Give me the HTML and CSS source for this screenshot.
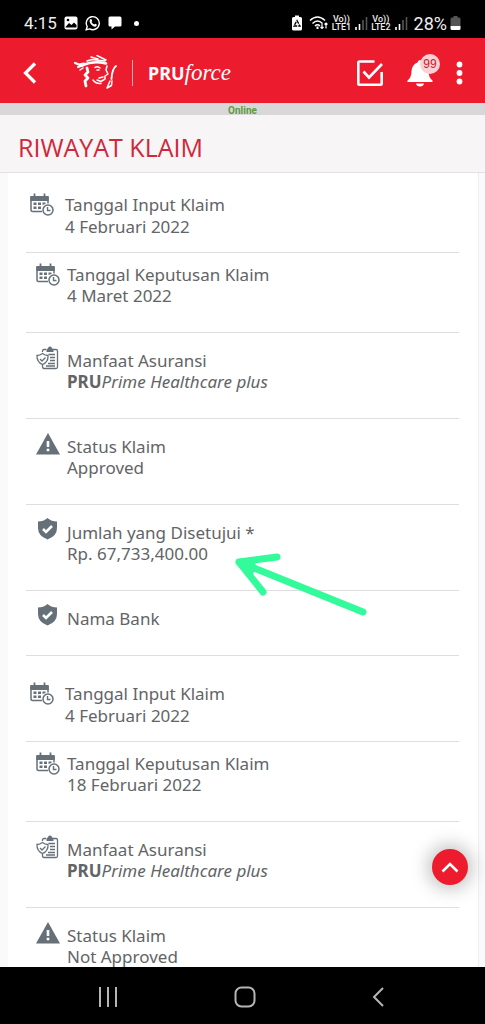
FILE: index.html
```html
<!DOCTYPE html>
<html lang="id">
<head>
<meta charset="utf-8">
<meta name="viewport" content="width=device-width, initial-scale=1">
<title>Riwayat Klaim</title>
<link rel="stylesheet" href="styles.css">
</head>
<body>
<svg class="sprite" aria-hidden="true">
  <symbol id="calendar" viewBox="0 0 24 24">
    <g fill="none" stroke="currentColor">
      <path d="M12 18.500H2.500Q1 18.500 1 17V4" stroke-width="1.500"/>
      <path d="M18 4V10.500" stroke-width="1.500"/>
      <path d="M4.500 .500V5M14.500 .500V5" stroke-width="1.800"/>
      <circle cx="18" cy="17" r="5" stroke-width="1.500"/>
      <path d="M17.500 14V17.500H20.500" stroke-width="1.400"/>
    </g>
    <path fill="currentColor" d="M.300 3H18.700V8H.300Z"/>
    <path fill="currentColor" d="M3.500 9.500h3v2.500h-3zM8 9.500h3v2.500h-3zM12.500 9.500h3v1.500l-3 1zM3.500 13.500h3v2.500h-3zM8 13.500h3v2.500h-3z"/>
  </symbol>
  <symbol id="policy" viewBox="0 0 24 24">
    <g fill="none" stroke="currentColor" stroke-width="1.300">
      <path d="M6.500 6V5Q6.500 3.500 8 3.500H10M17 3.500H20Q21.500 3.500 21.500 5V21Q21.500 22.500 20 22.500H8Q6.500 22.500 6.500 20.500V18"/>
      <path d="M6.500 7.500Q9 9.500 12 9.500Q12.500 16 6.500 18.500Q.700 16 1 9.500Q4 9.500 6.500 7.500Z"/>
      <path d="M4 13L6 15L9.500 11.500M12.500 8.500H19M14 11.500H19M14 14.500H19M12 17.500H19M10 20H19"/>
    </g>
    <path fill="currentColor" d="M10.500 6V3.500Q10.500 2.500 12 2.500Q12 .500 14 .500T16 2.500Q17.500 2.500 17.500 3.500V6Z"/>
  </symbol>
  <symbol id="warning" viewBox="0 0 24 24">
    <path fill="currentColor" d="M12 1L24 22.500H0Z"/>
    <path stroke="#fff" stroke-width="2.600" d="M12 9V15M12 16.800V19.300"/>
  </symbol>
  <symbol id="shield" viewBox="0 0 24 24">
    <path fill="currentColor" d="M11.500 0Q15.500 3.500 21 3.500V10Q21 18 11.500 21.500Q2 18 2 10V3.500Q7.500 3.500 11.500 0Z"/>
    <path fill="none" stroke="#fff" stroke-width="2.600" d="M7 11L10 14L16 8"/>
  </symbol>
  <symbol id="signal" viewBox="0 0 14 14">
    <path stroke="#fff" stroke-width="1.600" d="M2 11V14M5.500 8V14"/>
    <path stroke="#555" stroke-width="1.600" d="M9 4V14M12.500 1V14"/>
  </symbol>
</svg>

<div class="status">
  <div class="status-left">
    <span class="clock">4:15</span>
    <svg width="14" height="14" viewBox="0 0 14 14"><rect x=".500" y=".500" width="13" height="13" rx="2" fill="#fff"/><path d="M1.500 11L5 7L7.500 9L10 6.500L12.500 9V11.500H1.500Z" fill="#000"/><circle cx="4" cy="4" r="1.300"/></svg>
    <svg width="16" height="16" viewBox="0 0 16 16" fill="none" stroke="#fff"><path stroke-width="1.400" d="M1.200 14.800L2.200 11.500A6.500 6.500 0 1 1 4.700 13.900Z"/><path fill="#fff" stroke="none" d="M5 4.500Q6 3.500 6.700 4.500L7.200 6L6.500 7Q7.500 8.700 9.200 9.500L10.200 8.700L11.800 9.500Q12 11 10.500 11.700Q8.500 12 6.300 9.700Q3.800 7 5 4.500Z"/></svg>
    <svg width="14" height="14" viewBox="0 0 14 14"><path fill="#fff" d="M2 .500H12Q13.500 .500 13.500 2V9Q13.500 10.500 12 10.500H7L3.500 13.500V10.500H2Q.500 10.500 .500 9V2Q.500 .500 2 .500Z"/></svg>
    <span class="dot"></span>
  </div>
  <div class="status-right">
    <svg width="12" height="16" viewBox="0 0 12 16"><path fill="#fff" d="M4 .500H8V2H9.500Q11 2 11 3.500V14Q11 15.500 9.500 15.500H2.500Q1 15.500 1 14V3.500Q1 2 2.500 2H4Z"/><path fill="none" stroke="#000" stroke-width="1.300" stroke-dasharray="3.500 1" d="M6 5.500L9 11H3Z"/></svg>
    <svg class="wifi" width="20" height="16" viewBox="0 0 20 16" fill="none" stroke="#fff" stroke-width="1.500"><path d="M1 5.500Q8.500-1.500 16 5.500M3.500 8.500Q8.500 3.500 13.500 8.500M6 11Q8.500 8.500 11 11"/><path d="M8.500 11.500V14" stroke-width="2"/><path stroke-width="1.200" d="M13 8.500V13.500M11.500 12L13 13.500L14.500 12M17 13.500V8M15.500 9.500L17 8L18.500 9.500"/></svg>
    <span class="lte"><span>Vo))</span><span>LTE1</span></span>
    <svg width="14" height="14"><use href="#signal"/></svg>
    <span class="lte"><span>Vo))</span><span>LTE2</span></span>
    <svg width="14" height="14"><use href="#signal"/></svg>
    <span class="percent">28%</span>
    <svg width="11" height="16" viewBox="0 0 11 16"><path fill="#555" d="M3.500 1H7.500V2.500H9Q10.500 2.500 10.500 4V11H.500V4Q.500 2.500 2 2.500H3.500Z"/><path fill="#fff" d="M.500 11H10.500V13.500Q10.500 15 9 15H2Q.500 15 .500 13.500Z"/></svg>
  </div>
</div>

<header class="appbar">
  <button class="icon-btn back" aria-label="Kembali"><svg width="14" height="22" viewBox="0 0 14 22" fill="none" stroke="#fff" stroke-width="3.200"><path d="M12 1.500L2.500 11L12 20.500"/></svg></button>
  <svg class="face" width="46" height="36" viewBox="0 0 46 36" fill="none" stroke="#fff" stroke-linecap="round" stroke-linejoin="round">
    <path stroke-width="2.600" d="M10 10Q20 5.500 33 8.500"/>
    <path stroke-width="2.200" d="M2 8L6 9.500L11 8.500M5 12L10 10.500"/>
    <path stroke-width="1.500" d="M14 6L19 4.500L32 6M18 2L25 4M24 .500L33 5M10 13L7 15"/>
    <path stroke-width="2.800" d="M14 13L15 17L12 20L15 23L12 26L13 31"/>
    <path stroke-width="1.500" d="M22 12.500Q24 11 27 13M24 15H26M34 11L33 15L35 19L32 21L32 24L28 26.500L24 25M30 22L26 23M20 25Q23 29 28 28.500"/>
    <path stroke-width="1.900" d="M43 11Q39 14 38.500 24"/>
    <path stroke-width="1.500" d="M37 26L34 33L38.500 30.500L39 26"/>
  </svg>
  <span class="divider"></span>
  <span class="brand"><b>PRU</b><i>force</i></span>
  <div class="actions">
    <button class="icon-btn" aria-label="Tugas"><svg width="28" height="28" viewBox="0 0 28 28" fill="none" stroke="#fff" stroke-width="2.600"><path d="M18.500 2.500H3.500Q2.300 2.500 2.300 3.700V24.500Q2.300 25.700 3.500 25.700H24.500Q25.700 25.700 25.700 24.500V13"/><path d="M7.500 12.500L13 18.500L26 5"/></svg></button>
    <button class="icon-btn bell" aria-label="Notifikasi"><svg width="26" height="28" viewBox="0 0 26 28" fill="#fff"><path d="M13 1Q15 1 15.500 3.500Q21 5.500 21.500 12Q21.500 18.500 25.500 21.500V23H.500V21.500Q4.500 18.500 4.500 12Q5 5.500 10.500 3.500Q11 1 13 1Z"/><path d="M9 24.500H17Q16.500 27.500 13 27.500T9 24.500Z"/></svg><span class="badge">99</span></button>
    <button class="icon-btn" aria-label="Menu"><svg width="7" height="24" viewBox="0 0 7 24" fill="#fff"><circle cx="3.500" cy="3.500" r="2.900"/><circle cx="3.500" cy="12" r="2.900"/><circle cx="3.500" cy="20.500" r="2.900"/></svg></button>
  </div>
</header>
<div class="online">Online</div>
<h1 class="title">RIWAYAT KLAIM</h1>

<main class="content">
  <div class="card">
    <section class="claim">
      <div class="row first"><svg class="icon"><use href="#calendar"/></svg><div>Tanggal Input Klaim<br>4 Februari 2022</div></div>
      <div class="row decision"><svg class="icon"><use href="#calendar"/></svg><div>Tanggal Keputusan Klaim<br>4 Maret 2022</div></div>
      <div class="row"><svg class="icon"><use href="#policy"/></svg><div>Manfaat Asuransi<br><b>PRU</b><i>Prime Healthcare plus</i></div></div>
      <div class="row"><svg class="icon"><use href="#warning"/></svg><div>Status Klaim<br>Approved</div></div>
      <div class="row"><svg class="icon"><use href="#shield"/></svg><div>Jumlah yang Disetujui *<br>Rp. 67,733,400.00</div>
        <svg class="arrow" width="136" height="68" viewBox="0 0 136 68" fill="none" stroke="#33fb9b" stroke-width="7" stroke-linecap="round" stroke-linejoin="round"><path d="M129 60L5 10M43 5L5 10L29 40"/><path stroke="none" fill="#33fb9b" d="M5 10L22 10L19 23Z"/></svg>
      </div>
      <div class="row"><svg class="icon"><use href="#shield"/></svg><div>Nama Bank</div></div>
    </section>
    <section class="claim">
      <div class="row first"><svg class="icon"><use href="#calendar"/></svg><div>Tanggal Input Klaim<br>4 Februari 2022</div></div>
      <div class="row decision"><svg class="icon"><use href="#calendar"/></svg><div>Tanggal Keputusan Klaim<br>18 Februari 2022</div></div>
      <div class="row"><svg class="icon"><use href="#policy"/></svg><div>Manfaat Asuransi<br><b>PRU</b><i>Prime Healthcare plus</i></div></div>
      <div class="row"><svg class="icon"><use href="#warning"/></svg><div>Status Klaim<br>Not Approved</div></div>
    </section>
  </div>
  <button class="to-top" aria-label="Ke atas"><svg width="18" height="12" viewBox="0 0 18 12" fill="none" stroke="#fff" stroke-width="2.600"><path d="M1.500 10.500L9 3L16.500 10.500"/></svg></button>
</main>

<nav class="navbar">
  <button class="icon-btn" aria-label="Aplikasi terbaru"><svg width="20" height="20" viewBox="0 0 20 20" stroke="#b5b5b5" stroke-width="2"><path d="M2 0V20M10 0V20M18 0V20"/></svg></button>
  <button class="icon-btn" aria-label="Beranda"><svg width="22" height="22" viewBox="0 0 22 22" fill="none" stroke="#b5b5b5" stroke-width="2"><rect x="1.500" y="1.500" width="19" height="19" rx="6"/></svg></button>
  <button class="icon-btn" aria-label="Kembali"><svg width="12" height="20" viewBox="0 0 12 20" fill="none" stroke="#b5b5b5" stroke-width="2"><path d="M11 1L2 10L11 19"/></svg></button>
</nav>
</body>
</html>
```
FILE: styles.css
```css
* {
  box-sizing: border-box;
}

body {
  margin: 0;
  height: 100vh;
  display: flex;
  flex-direction: column;
  background: #fff;
  color: #636466;
  font-family: "Noto Sans", "Open Sans", sans-serif;
  font-size: 17px;
}

svg {
  display: block;
  flex: none;
}

.sprite {
  position: absolute;
  width: 0;
  height: 0;
}

.status {
  display: flex;
  justify-content: space-between;
  align-items: center;
  padding: 8px 24px 0;
  height: 38px;
  background: #000;
  color: #eee;
  font-family: Roboto, sans-serif;
}

.status-left,
.status-right {
  display: flex;
  align-items: center;
}

.status-left {
  gap: 7px;
}

.status-right {
  gap: 3px;
}

.clock {
  font-size: 17px;
}

.percent {
  margin-left: 3px;
  font-size: 18px;
}

.dot {
  width: 5px;
  height: 5px;
  margin-left: 5px;
  border-radius: 50%;
  background: #fff;
}

.wifi {
  margin-left: 3px;
}

.lte {
  display: flex;
  flex-direction: column;
  align-items: center;
  font-size: 9px;
  font-weight: 500;
  line-height: 8px;
}

.appbar {
  display: flex;
  align-items: center;
  height: 65px;
  padding: 4px 22px 0 23px;
  background: #ed1b2e;
  color: #fff;
}

.icon-btn {
  display: block;
  padding: 0;
  border: 0;
  background: none;
}

.face {
  margin-left: 36px;
}

.divider {
  width: 1px;
  height: 26px;
  margin: 0 15px 0 13px;
  background: #fba9b0;
}

.brand {
  font-size: 18px;
  line-height: 26px;
}

.brand i {
  font-family: "Liberation Serif", serif;
  font-size: 23px;
}

.actions {
  display: flex;
  align-items: center;
  gap: 23px;
  margin-left: auto;
}

.bell {
  position: relative;
}

.badge {
  position: absolute;
  top: -5px;
  right: -7px;
  width: 20px;
  height: 20px;
  border-radius: 50%;
  background: #fbcfd3;
  color: #c4202f;
  font-size: 12px;
  line-height: 20px;
  text-align: center;
}

.online {
  height: 12px;
  background: #d8d8d8;
  color: #5d9a3f;
  font-family: Roboto, sans-serif;
  font-size: 10px;
  font-weight: 700;
  line-height: 15px;
  text-align: center;
}

.title {
  margin: 0;
  padding: 18px 18px 11px;
  border-bottom: 1px solid #e3e1e2;
  background: #f7f5f6;
  color: #d0273a;
  font-family: "Open Sans", "Noto Sans", sans-serif;
  font-size: 25px;
  font-weight: 400;
  line-height: 28px;
}

.content {
  position: relative;
  flex: 1;
  min-height: 0;
  overflow: hidden;
  padding: 0 6px 0 8px;
  background: #fafafa;
}

.card {
  padding: 0 19px 0 18px;
  border-right: 1px solid #eee;
  background: #fff;
}

.claim + .claim {
  padding-top: 6px;
}

.row {
  position: relative;
  display: flex;
  gap: 7px;
  padding: 17px 0 26px 10px;
  border-bottom: 1px solid #dedede;
  line-height: 21px;
}

.icon {
  width: 24px;
  height: 24px;
  margin-top: -4px;
  color: #667078;
}

.row.first {
  gap: 11px;
  padding: 21px 0 14px 4px;
  line-height: 22px;
}

.row.decision {
  padding-top: 11px;
}

.row.first .icon,
.row.decision .icon {
  margin-top: -1px;
}

.arrow {
  position: absolute;
  top: 47px;
  left: 208px;
  z-index: 1;
}

.to-top {
  position: absolute;
  right: 17px;
  bottom: 82px;
  display: grid;
  place-items: center;
  width: 36px;
  height: 36px;
  padding: 0;
  border: 0;
  border-radius: 50%;
  background: #ed1b2e;
  box-shadow: 0 0 18px 4px rgba(0, 0, 0, 0.25);
}

.navbar {
  display: flex;
  justify-content: space-around;
  align-items: center;
  height: 57px;
  padding: 3px 43px 0 40px;
  background: #000;
}
```
